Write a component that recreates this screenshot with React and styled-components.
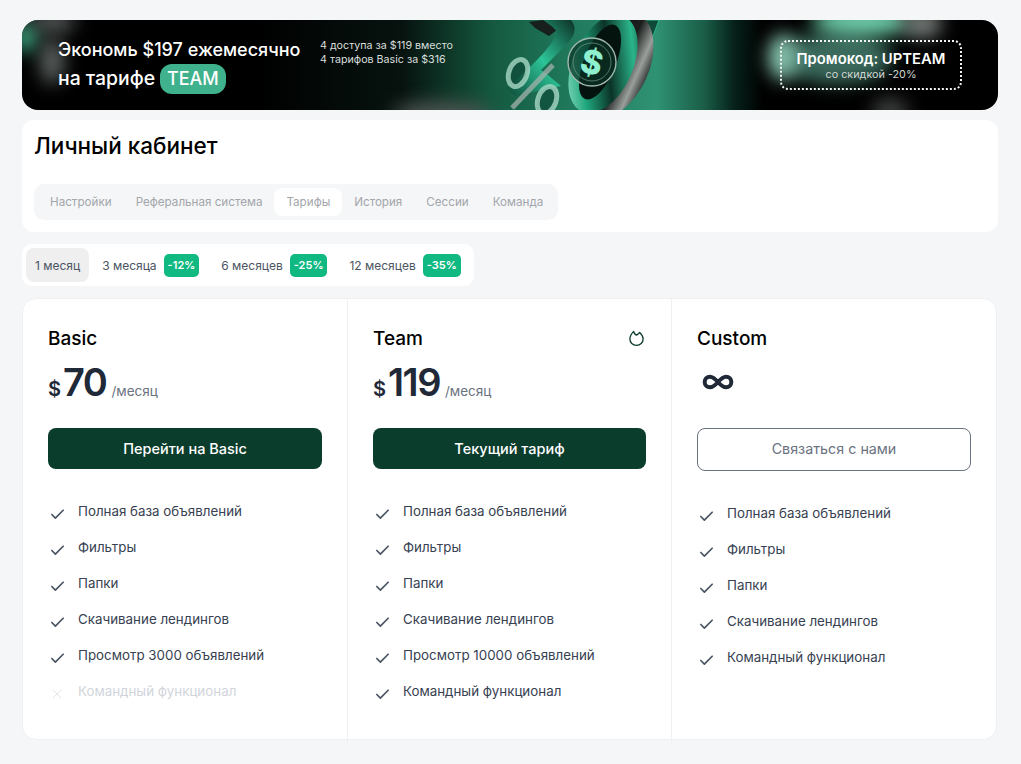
import styled, { createGlobalStyle } from "styled-components";
import { Check, X, Infinity as InfinityIcon } from "lucide-react";

const tabs = ["Настройки", "Реферальная система", "Тарифы", "История", "Сессии", "Команда"];

const periods = [
  { label: "1 месяц", active: true },
  { label: "3 месяца", badge: "-12%" },
  { label: "6 месяцев", badge: "-25%" },
  { label: "12 месяцев", badge: "-35%" },
];

const plans = [
  {
    name: "Basic",
    price: "70",
    button: "Перейти на Basic",
    features: [
      ["Полная база объявлений", true],
      ["Фильтры", true],
      ["Папки", true],
      ["Скачивание лендингов", true],
      ["Просмотр 3000 объявлений", true],
      ["Командный функционал", false],
    ],
  },
  {
    name: "Team",
    price: "119",
    hot: true,
    button: "Текущий тариф",
    features: [
      ["Полная база объявлений", true],
      ["Фильтры", true],
      ["Папки", true],
      ["Скачивание лендингов", true],
      ["Просмотр 10000 объявлений", true],
      ["Командный функционал", true],
    ],
  },
  {
    name: "Custom",
    custom: true,
    button: "Связаться с нами",
    features: [
      ["Полная база объявлений", true],
      ["Фильтры", true],
      ["Папки", true],
      ["Скачивание лендингов", true],
      ["Командный функционал", true],
    ],
  },
];

const bannerBlobs = [
  { x: -8, y: 2, w: 24, h: 30, c: "#3dac85" },
  { x: 8, y: -8, w: 46, h: 20, c: "#5a605e" },
  { x: 18, y: 18, w: 24, h: 46, c: "#5d6462" },
  { x: 370, y: 82, w: 100, h: 24, c: "#4f5552" },
  { x: 760, y: 12, w: 110, h: 52, c: "#3b6a5c" },
  { x: 746, y: 14, w: 30, h: 46, c: "#86c4ae" },
  { x: 790, y: -14, w: 100, h: 30, c: "#6fd0ac" },
  { x: 880, y: -10, w: 40, h: 28, c: "#777d7a" },
  { x: 850, y: 78, w: 36, h: 26, c: "#3f4240" },
];

const BannerArt = () => (
  <ArtSvg viewBox="0 0 180 90" width="180" height="90">
    <defs>
      <linearGradient id="ringGreen" x1="0" y1="1" x2="1" y2="0">
        <stop offset="0" stopColor="#b6f2dc" />
        <stop offset="0.3" stopColor="#1fa67c" />
        <stop offset="0.55" stopColor="#0b3327" />
        <stop offset="0.8" stopColor="#2ab58a" />
        <stop offset="1" stopColor="#0d2d23" />
      </linearGradient>
      <linearGradient id="ringSteel" x1="0" y1="0" x2="1" y2="0">
        <stop offset="0" stopColor="#121513" />
        <stop offset="0.6" stopColor="#1a1d1b" />
        <stop offset="0.85" stopColor="#9a9f9c" />
        <stop offset="1" stopColor="#3a3e3c" />
      </linearGradient>
      <linearGradient id="twoBand" x1="0" y1="1" x2="1" y2="0">
        <stop offset="0" stopColor="#0f4a38" />
        <stop offset="0.5" stopColor="#2cc598" />
        <stop offset="1" stopColor="#0c2f25" />
      </linearGradient>
    </defs>
    <path d="M34 2 L48 0 L62 10 L54 16 L40 8 Z" fill="#17201d" />
    <path d="M52 0 H76 C82 8 80 14 74 22 L46 50 L54 56 L66 66 L20 76 L12 68 L34 48 C46 36 58 24 62 12 Z" fill="url(#twoBand)" />
    <path d="M143 0 H164 L158 16 L150 12 Z" fill="#0f4a38" stroke="#2ab58a" strokeWidth="1" />
    <ellipse cx="120" cy="45" rx="34" ry="56" transform="rotate(24 120 45)" fill="url(#ringSteel)" />
    <ellipse cx="108" cy="44" rx="30" ry="52" transform="rotate(24 108 44)" fill="url(#ringGreen)" />
    <ellipse cx="105" cy="42" rx="16" ry="40" transform="rotate(22 105 42)" fill="#05130f" />
    <circle cx="97" cy="42" r="24" fill="#0b3327" fillOpacity="0.7" stroke="#9fb9ae" strokeWidth="1.4" />
    <circle cx="97" cy="42" r="19" fill="none" stroke="#6f9a8b" strokeWidth="0.7" />
    <text x="97" y="54" textAnchor="middle" transform="rotate(15 97 42)" fontFamily="Inter, sans-serif" fontWeight="800" fontSize="33" fill="#8ff0d0">$</text>
    <path d="M58 45 L17 88" stroke="#a4b1ac" strokeWidth="5" strokeOpacity="0.75" />
    <ellipse cx="23" cy="53" rx="9" ry="14" transform="rotate(20 23 53)" fill="#0c4535" fillOpacity="0.6" stroke="#a7d8c6" strokeWidth="5" strokeOpacity="0.8" />
    <ellipse cx="52" cy="80" rx="9" ry="14" transform="rotate(20 52 80)" fill="#0c4535" fillOpacity="0.6" stroke="#a7d8c6" strokeWidth="5" strokeOpacity="0.8" />
  </ArtSvg>
);

const FlameIcon = () => (
  <FlameSvg width="17" height="17" viewBox="0 0 18 18" fill="none" stroke="#0b3d2c" strokeWidth="1.4" strokeLinejoin="round">
    <path d="M6 1.5 C6.4 3.5 7.5 5 9 5.4 C10.5 4.6 11.8 3.6 12.4 2.6 C14.6 4.6 16 6.8 16 9.6 C16 13.4 13 16.2 9 16.2 C5 16.2 2 13.4 2 9.6 C2 6.4 3.8 3.8 6 1.5 Z" />
  </FlameSvg>
);

const App = () => (
  <Page>
    <GlobalStyle />
    <Banner>
      {bannerBlobs.map((blob) => (
        <Blob key={`${blob.x}-${blob.y}`} $x={blob.x} $y={blob.y} $w={blob.w} $h={blob.h} $c={blob.c} />
      ))}
      <BannerHeadline>
        Экономь $197 ежемесячно
        <br />
        <HeadlineTail>на тарифе</HeadlineTail> <TeamTag>TEAM</TeamTag>
      </BannerHeadline>
      <BannerNote>
        4 доступа за $119 вместо
        <br />
        4 тарифов Basic за $316
      </BannerNote>
      <BannerArt />
      <Promo>
        <PromoCode>Промокод: UPTEAM</PromoCode>
        <PromoSub>со скидкой -20%</PromoSub>
      </Promo>
    </Banner>

    <AccountCard>
      <Title>Личный кабинет</Title>
      <Tabs>
        {tabs.map((tab) => (
          <Tab key={tab} $active={tab === "Тарифы"}>
            {tab}
          </Tab>
        ))}
      </Tabs>
    </AccountCard>

    <Periods>
      {periods.map((period) => (
        <Period key={period.label} $active={period.active}>
          {period.label}
          {period.badge && <Badge>{period.badge}</Badge>}
        </Period>
      ))}
    </Periods>

    <Plans>
      {plans.map((plan) => (
        <Plan key={plan.name}>
          <PlanHead>
            <PlanName>{plan.name}</PlanName>
            {plan.hot && <FlameIcon />}
          </PlanHead>
          {plan.custom ? (
            <PriceRow>
              <InfinityMark>
                <InfinityIcon size={32} strokeWidth={3} color="#1f2937" />
              </InfinityMark>
            </PriceRow>
          ) : (
            <PriceRow>
              <Currency>$</Currency>
              <Amount>{plan.price}</Amount>
              <Per>/месяц</Per>
            </PriceRow>
          )}
          <PlanButton $outline={plan.custom}>{plan.button}</PlanButton>
          <Features>
            {plan.features.map(([text, on]) => (
              <Feature key={text} $off={!on}>
                <FeatureIcon>
                  {on ? <Check size={17} strokeWidth={2.4} color="#4b5563" /> : <X size={16} strokeWidth={1} color="#d1d5db" />}
                </FeatureIcon>
                {text}
              </Feature>
            ))}
          </Features>
        </Plan>
      ))}
    </Plans>
  </Page>
);

export default App;

const GlobalStyle = createGlobalStyle`
  body {
    margin: 0;
    background: #f5f6f8;
    font-family: "Inter", "Liberation Sans", sans-serif;
  }
`;

const Page = styled.div`
  width: 976px;
  padding: 20px 0 24px 22px;
  display: flex;
  flex-direction: column;
  align-items: flex-start;
`;

const Banner = styled.div`
  position: relative;
  overflow: hidden;
  box-sizing: border-box;
  width: 976px;
  height: 90px;
  padding-left: 36px;
  display: flex;
  align-items: center;
  border-radius: 16px;
  color: #fff;
  background: linear-gradient(
    90deg,
    #000 0%,
    #000 24%,
    #07130f 39%,
    #14583f 48%,
    #1e7558 55%,
    #2f9273 65%,
    #1a5c46 70%,
    #06211a 73%,
    #000 76%,
    #000 100%
  );
`;

const Blob = styled.div`
  position: absolute;
  left: ${(p) => p.$x}px;
  top: ${(p) => p.$y}px;
  width: ${(p) => p.$w}px;
  height: ${(p) => p.$h}px;
  border-radius: 50%;
  background: ${(p) => p.$c};
  filter: blur(9px);
`;

const BannerHeadline = styled.div`
  position: relative;
  width: 262px;
  font-size: 18px;
  font-weight: 500;
  line-height: 28px;
  white-space: nowrap;
`;

const HeadlineTail = styled.span`
  font-size: 19.4px;
`;

const TeamTag = styled.span`
  display: inline-block;
  padding: 0 7px;
  line-height: 30px;
  border-radius: 12px;
  background: #3fb18c;
`;

const BannerNote = styled.div`
  position: relative;
  align-self: flex-start;
  margin-top: 19px;
  font-size: 10.7px;
  line-height: 14px;
  color: #d9dedc;
  white-space: nowrap;
`;

const ArtSvg = styled.svg`
  position: absolute;
  left: 473px;
  top: 0;
`;

const Promo = styled.div`
  position: absolute;
  left: 758px;
  top: 20px;
  box-sizing: border-box;
  width: 182px;
  height: 50px;
  display: flex;
  flex-direction: column;
  align-items: center;
  justify-content: center;
  border: 2px dotted #f1f4f3;
  border-radius: 8px;
`;

const PromoCode = styled.div`
  font-size: 14.8px;
  font-weight: 600;
  line-height: 18px;
`;

const PromoSub = styled.div`
  font-size: 10.8px;
  line-height: 13px;
  color: #cfd6d3;
`;

const AccountCard = styled.section`
  box-sizing: border-box;
  width: 976px;
  height: 112px;
  margin-top: 10px;
  padding: 12px;
  background: #fff;
  border-radius: 12px;
`;

const Title = styled.h1`
  margin: 0 0 24px;
  height: 28px;
  font-size: 22.5px;
  font-weight: 500;
  line-height: 28px;
  color: #000;
`;

const Tabs = styled.nav`
  display: inline-flex;
  padding: 4px 3px 4px 4px;
  background: #f5f6f8;
  border-radius: 10px;
`;

const Tab = styled.span`
  padding: 0 12px;
  height: 28px;
  line-height: 28px;
  font-size: 11.65px;
  color: #a3a6ab;
  border-radius: 8px;
  background: ${(p) => (p.$active ? "#fff" : "transparent")};
`;

const Periods = styled.div`
  display: flex;
  align-items: center;
  height: 42px;
  margin-top: 12px;
  padding: 0 0 0 4px;
  background: #fff;
  border-radius: 10px;
`;

const Period = styled.div`
  display: flex;
  align-items: center;
  gap: 7px;
  height: 34px;
  padding: 0 9px;
  margin-right: 4px;
  font-size: 12px;
  color: #4b5563;
  border-radius: 8px;
  background: ${(p) => (p.$active ? "#efefef" : "transparent")};
`;

const Badge = styled.span`
  display: inline-block;
  padding: 0 4px;
  height: 23px;
  line-height: 23px;
  font-size: 11px;
  font-weight: 600;
  color: #fff;
  background: #10b981;
  border-radius: 5px;
`;

const Plans = styled.div`
  box-sizing: border-box;
  display: grid;
  grid-template-columns: 324px 324px 1fr;
  width: 975px;
  height: 442px;
  margin-top: 12px;
  background: #fff;
  border: 1px solid #eef0f2;
  border-radius: 14px;
`;

const Plan = styled.div`
  padding: 26px 25px;
  & + & {
    border-left: 1px solid #eef0f2;
  }
`;

const PlanHead = styled.div`
  display: flex;
  justify-content: space-between;
  align-items: center;
  height: 26px;
`;

const PlanName = styled.div`
  font-size: 19px;
  font-weight: 500;
  color: #000;
`;

const FlameSvg = styled.svg`
  margin-right: 1px;
`;

const PriceRow = styled.div`
  display: flex;
  align-items: baseline;
  height: 52px;
  margin-top: 5px;
  color: #1f2937;
`;

const Currency = styled.span`
  font-size: 20px;
  font-weight: 600;
  margin-right: 2px;
`;

const Amount = styled.span`
  font-size: 38px;
  font-weight: 600;
  line-height: 52px;
  letter-spacing: -1.5px;
`;

const Per = styled.span`
  margin-left: 5px;
  font-size: 13.5px;
  color: #6b7280;
`;

const InfinityMark = styled.span`
  display: block;
  margin: 10px 0 0 5px;
  height: 32px;
`;

const PlanButton = styled.button`
  display: block;
  width: 100%;
  height: ${(p) => (p.$outline ? "43px" : "41px")};
  margin-top: 20px;
  padding: 0 0 ${(p) => (p.$outline ? "2px" : "0")};
  font-family: inherit;
  font-size: ${(p) => (p.$outline ? "14.3px" : "14.5px")};
  font-weight: ${(p) => (p.$outline ? 400 : 500)};
  color: ${(p) => (p.$outline ? "#6b7280" : "#fff")};
  background: ${(p) => (p.$outline ? "#fff" : "#0b3d2c")};
  border: ${(p) => (p.$outline ? "1px solid #6b7280" : "none")};
  border-radius: 8px;
`;

const Features = styled.ul`
  list-style: none;
  margin: 33px 0 0;
  padding: 0;
`;

const Feature = styled.li`
  display: flex;
  align-items: flex-start;
  height: 36px;
  font-size: 13.35px;
  line-height: 18px;
  color: ${(p) => (p.$off ? "#d1d5db" : "#374151")};
`;

const FeatureIcon = styled.span`
  display: flex;
  justify-content: center;
  width: 18px;
  margin-right: 12px;
  padding-top: 4px;
`;
